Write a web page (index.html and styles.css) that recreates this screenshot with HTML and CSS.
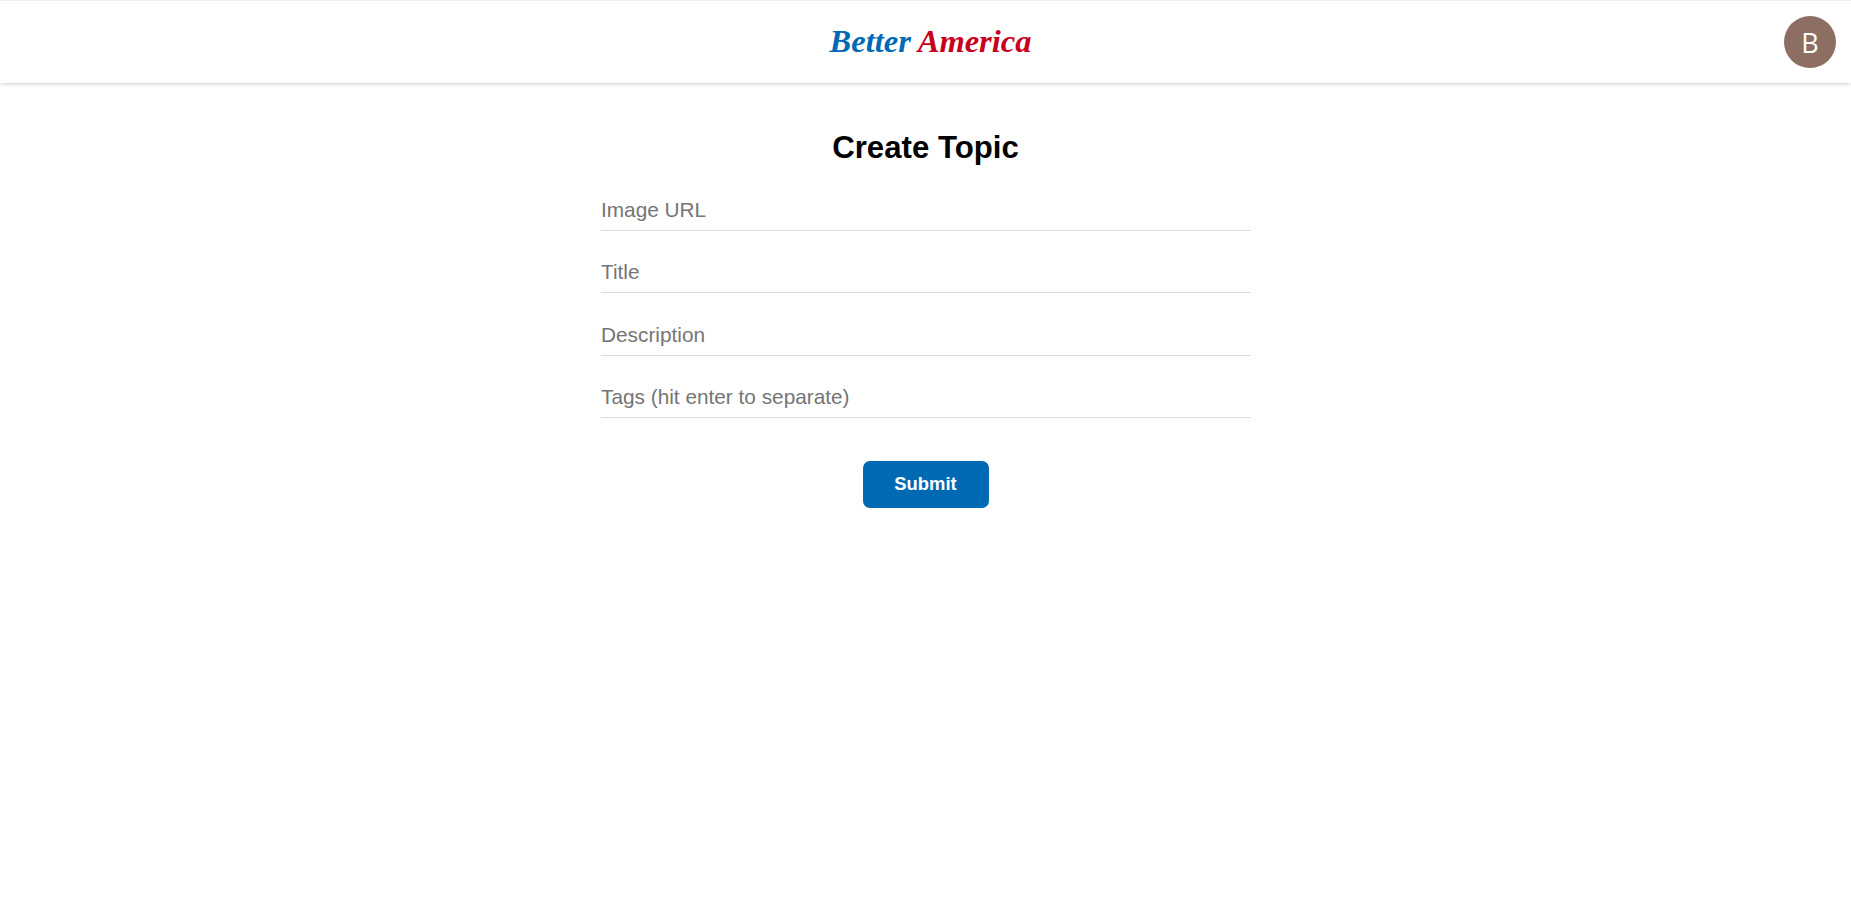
FILE: index.html
```html
<!DOCTYPE html>
<html lang="en">
<head>
  <meta charset="UTF-8" />
  <meta name="viewport" content="width=device-width, initial-scale=1.0" />
  <title>Better America - Create Topic</title>
  <link rel="stylesheet" href="styles.css">
</head>
<body>
  <header class="topbar">
    <a class="logo" href="#"><span class="logo-blue">Better</span> <span class="logo-red">America</span></a>
    <div class="avatar">B</div>
  </header>

  <main class="content">
    <h1>Create Topic</h1>
    <form class="topic-form">
      <input type="text" placeholder="Image URL" />
      <input type="text" placeholder="Title" />
      <input type="text" placeholder="Description" />
      <input type="text" placeholder="Tags (hit enter to separate)" />
      <button type="button">Submit</button>
    </form>
  </main>
</body>
</html>
```

FILE: styles.css
```css
:root {
  --blue: #0069b4;
  --red: #c8001e;
  --border: #dddddd;
  --muted: #757575;
}

body {
  font-family: 'Liberation Sans', Arial, sans-serif;
  margin: 0;
  background: #ffffff;
  color: #000000;
}

.topbar {
  height: 82px;
  border-top: 1px solid #eeeeee;
  box-shadow: 0 1px 4px rgba(0, 0, 0, 0.2);
  display: flex;
  align-items: center;
  justify-content: center;
  position: relative;
}

.logo {
  font-family: cursive;
  font-style: italic;
  font-weight: 700;
  font-size: 32.5px;
  text-decoration: none;
  margin-left: 10px;
  margin-top: -1px;
}

.logo-blue {
  color: var(--blue);
}

.logo-red {
  color: var(--red);
}

.avatar {
  position: absolute;
  right: 15px;
  top: 15px;
  width: 52px;
  height: 52px;
  border-radius: 50%;
  background: #8d6e63;
  color: #ffffff;
  font-family: 'Open Sans', sans-serif;
  font-size: 27px;
  display: flex;
  align-items: center;
  justify-content: center;
}

.content {
  width: 650px;
  margin: 0 auto;
  padding-top: 46px;
}

h1 {
  font-size: 31.2px;
  line-height: 37px;
  margin: 0 0 16.5px;
  text-align: center;
}

.topic-form {
  display: flex;
  flex-direction: column;
  align-items: center;
  gap: 14.5px;
}

.topic-form input {
  width: 100%;
  box-sizing: border-box;
  height: 48px;
  padding: 7px 0 0 0.5px;
  border: none;
  border-bottom: 1px solid var(--border);
  outline: none;
  font-family: inherit;
  font-size: 20.8px;
}

.topic-form input::placeholder {
  color: var(--muted);
  opacity: 1;
}

.topic-form button {
  margin-top: 28px;
  width: 126px;
  height: 47px;
  background: var(--blue);
  color: #ffffff;
  border: none;
  border-radius: 7px;
  font-family: inherit;
  font-size: 18.4px;
  font-weight: 700;
  cursor: pointer;
}
```
